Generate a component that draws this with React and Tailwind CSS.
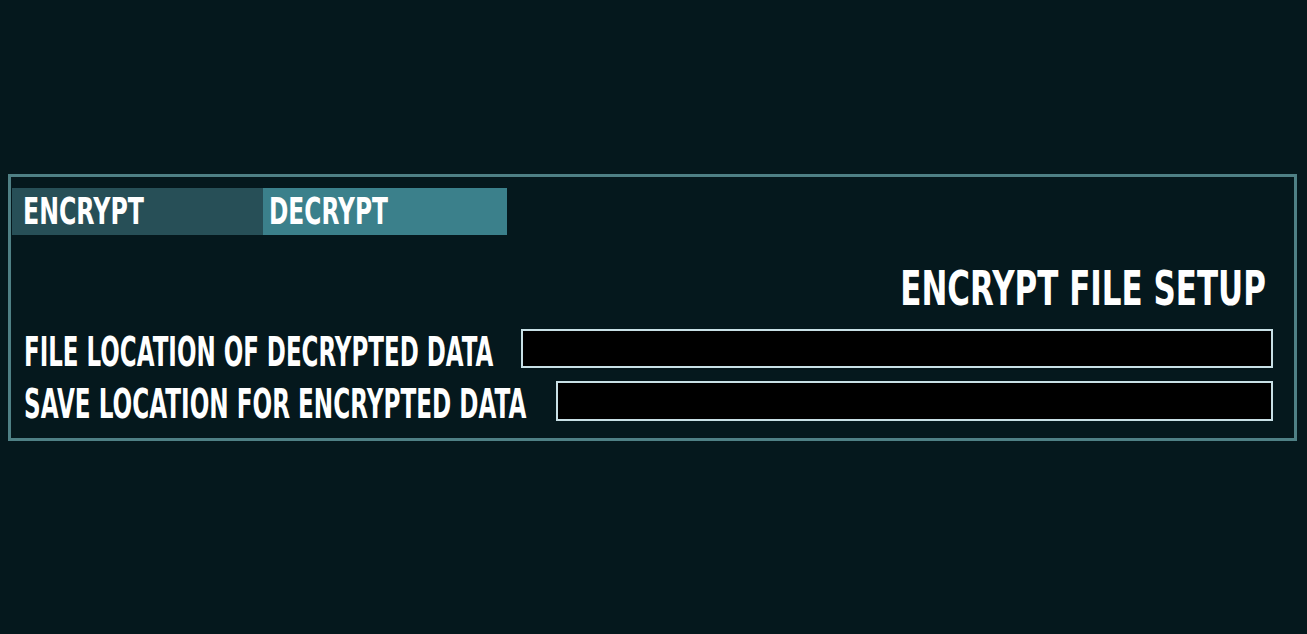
import React from "react";

const font = { fontFamily: '"DejaVu Sans", "Liberation Sans", sans-serif' };

export default function App() {
  return (
    <div className="min-h-screen h-[634px] bg-[#05181d] pt-[174px] pl-[8px] pr-[10px]" style={font}>
      {/* main panel */}
      <div className="border-[3px] border-[#4f8085] h-[267px] flex flex-col pt-[11px] pl-px pr-[21px]">
        {/* tabs */}
        <div className="flex h-[47px]">
          <button className="w-[251px] h-full bg-[#274f57] text-white flex items-center pl-[11px] text-[37px] font-bold leading-none">
            <span className="inline-block whitespace-nowrap origin-left scale-x-[0.64]">ENCRYPT</span>
          </button>
          <button className="w-[244px] h-full bg-[#3b808b] text-white flex items-center pl-[6px] text-[37px] font-bold leading-none">
            <span className="inline-block whitespace-nowrap origin-left scale-x-[0.63]">DECRYPT</span>
          </button>
        </div>

        <h2 className="text-white flex justify-end pr-[7px] text-[48px] font-bold leading-none mt-[29px]">
          <span className="inline-block whitespace-nowrap origin-right scale-x-[0.645]">ENCRYPT FILE SETUP</span>
        </h2>

        {/* fields */}
        <div className="flex flex-col gap-[13px] mt-[17px] pl-[12px]">
          <div className="flex items-center h-[39px]">
            <label className="w-[497px] shrink-0 pt-[6px] text-white text-[40px] font-bold leading-none">
              <span className="inline-block whitespace-nowrap origin-left scale-x-[0.574]">FILE LOCATION OF DECRYPTED DATA</span>
            </label>
            <input className="flex-1 h-[39px] bg-black border-2 border-[#c8e0e6] outline-none" />
          </div>
          <div className="flex items-center h-[40px]">
            <label className="w-[532px] shrink-0 pt-[6px] text-white text-[40px] font-bold leading-none">
              <span className="inline-block whitespace-nowrap origin-left scale-x-[0.578]">SAVE LOCATION FOR ENCRYPTED DATA</span>
            </label>
            <input className="flex-1 h-[40px] bg-black border-2 border-[#c8e0e6] outline-none" />
          </div>
        </div>
      </div>
    </div>
  );
}
